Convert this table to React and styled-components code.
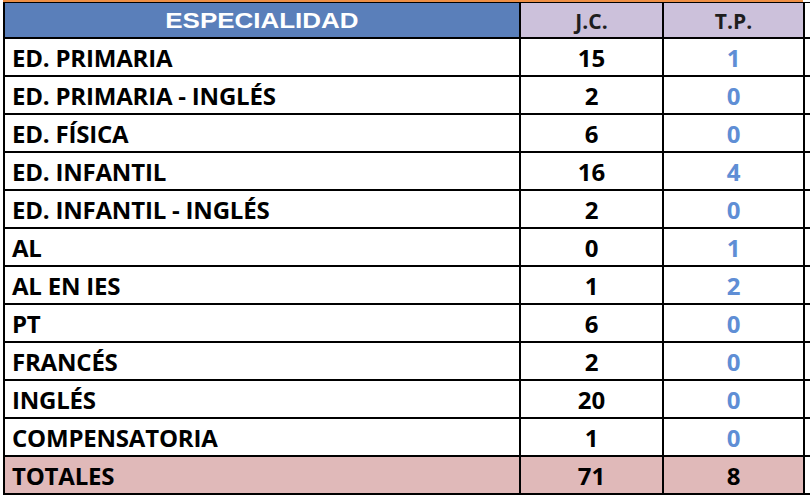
import styled, { createGlobalStyle } from 'styled-components';

const rows = [
  { name: 'ED. PRIMARIA', jc: 15, tp: 1 },
  { name: 'ED. PRIMARIA - INGLÉS', jc: 2, tp: 0 },
  { name: 'ED. FÍSICA', jc: 6, tp: 0 },
  { name: 'ED. INFANTIL', jc: 16, tp: 4 },
  { name: 'ED. INFANTIL - INGLÉS', jc: 2, tp: 0 },
  { name: 'AL', jc: 0, tp: 1 },
  { name: 'AL EN IES', jc: 1, tp: 2 },
  { name: 'PT', jc: 6, tp: 0 },
  { name: 'FRANCÉS', jc: 2, tp: 0 },
  { name: 'INGLÉS', jc: 20, tp: 0 },
  { name: 'COMPENSATORIA', jc: 1, tp: 0 },
];

const App = () => {
  return (
    <>
      <GlobalStyle />
      <Sheet>
        <TopRule />
        <Table>
          <HeadCell $bg="#5a7fba">
            <MainTitle>ESPECIALIDAD</MainTitle>
          </HeadCell>
          <HeadCell $bg="#ccc1db">J.C.</HeadCell>
          <HeadCell $bg="#ccc1db">T.P.</HeadCell>
          <Spill />
          {rows.map((row) => (
            <Row key={row.name}>
              <NameCell>{row.name}</NameCell>
              <NumCell>{row.jc}</NumCell>
              <NumCell $blue>{row.tp}</NumCell>
              <Spill />
            </Row>
          ))}
          <NameCell $bg="#e0b9b9">TOTALES</NameCell>
          <NumCell $bg="#e0b9b9">71</NumCell>
          <NumCell $bg="#e0b9b9">8</NumCell>
          <Spill />
        </Table>
      </Sheet>
    </>
  );
};

const GlobalStyle = createGlobalStyle`
  body {
    margin: 0;
    background: #ffffff;
  }
`;

const Sheet = styled.div`
  width: 810px;
  height: 502px;
  overflow: hidden;
  padding-left: 3px;
  box-sizing: border-box;
  background: #ffffff;
`;

const TopRule = styled.div`
  width: 800px;
  height: 2px;
  background: #ee8f45;
`;

const Table = styled.div`
  display: grid;
  grid-template-columns: 514px 141px 139px 5px;
  grid-template-rows: 34px repeat(12, 36px);
  gap: 2px;
  padding: 1px 0 2px 2px;
  width: 807px;
  box-sizing: border-box;
  background: #000000;
`;

const Row = styled.div`
  display: contents;
`;

const HeadCell = styled.div`
  display: flex;
  align-items: center;
  justify-content: center;
  background: ${(p) => p.$bg};
  font-family: 'Open Sans', 'Liberation Sans', sans-serif;
  font-weight: 700;
  font-size: 21px;
  color: #1e1e1e;
  padding-top: 1px;
`;

const MainTitle = styled.span`
  display: inline-block;
  font-family: 'Liberation Sans', Arial, sans-serif;
  font-weight: 700;
  font-size: 22px;
  color: #ffffff;
  transform: scaleX(1.18);
`;

const NameCell = styled.div`
  display: flex;
  align-items: center;
  padding-left: 7px;
  background: ${(p) => p.$bg || '#ffffff'};
  font-family: 'Open Sans', 'Liberation Sans', sans-serif;
  font-weight: 700;
  font-size: 24px;
  letter-spacing: -0.2px;
  color: #000000;
`;

const NumCell = styled.div`
  display: flex;
  align-items: center;
  justify-content: center;
  background: ${(p) => p.$bg || '#ffffff'};
  font-family: 'Open Sans', 'Liberation Sans', sans-serif;
  font-weight: 700;
  font-size: 24px;
  color: ${(p) => (p.$blue ? '#5f8ed5' : '#000000')};
`;

const Spill = styled.div`
  background: #ffffff;
`;

export default App;
